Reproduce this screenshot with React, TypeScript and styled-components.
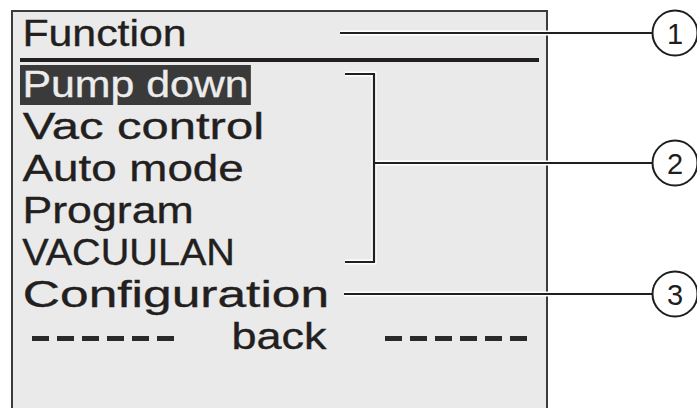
import React from "react";
import styled, { createGlobalStyle } from "styled-components";

const GlobalStyle = createGlobalStyle`
  html, body {
    margin: 0;
    padding: 0;
    background: #ffffff;
  }
  body {
    font-family: "Liberation Sans", Arial, sans-serif;
  }
`;

const Page = styled.div`
  position: relative;
  width: 697px;
  height: 408px;
  overflow: hidden;
  background: #ffffff;
`;

const Display = styled.div`
  box-sizing: border-box;
  margin: 10px 0 0 11px;
  width: 537px;
  height: 420px;
  border: 2px solid #3c3c3c;
  background: #e9eae9;
  padding: 1px 7px 0 7px;
  color: #231f20;
  font-size: 36px;
  -webkit-text-stroke: 0.35px currentColor;
`;

// one line of the LCD: fixed 42px pitch
const Line = styled.div`
  height: 42px;
  line-height: 42px;
  white-space: nowrap;
`;

// the display font is a wide sans: Arial stretched per string
const Caption = styled.span<{ $sx: number; $selected?: boolean }>`
  display: inline-block;
  height: 40px;
  line-height: 40px;
  padding: 0 2px;
  transform: scaleX(${(p) => p.$sx});
  transform-origin: left center;
  background: ${(p) => (p.$selected ? "#3a3a3a" : "transparent")};
  color: ${(p) => (p.$selected ? "#ececec" : "inherit")};
  -webkit-text-stroke-color: ${(p) => (p.$selected ? "#ececec" : "currentColor")};
`;

const Rule = styled.div`
  height: 4px;
  margin: 3px 0 2px 0;
  background: #231f20;
`;

const Footer = styled(Line)`
  display: flex;
  align-items: center;
  padding-left: 12px;
`;

const Dashes = styled.div<{ $gapLeft?: number }>`
  display: flex;
  gap: 8px;
  margin-top: 3px;
  margin-left: ${(p) => p.$gapLeft ?? 0}px;
`;

const Dash = styled.span`
  display: block;
  width: 17px;
  height: 5px;
  background: #2a2a2a;
`;

const Back = styled(Caption)`
  margin-left: 55px;
`;

const Callouts = styled.svg`
  position: absolute;
  left: 0;
  top: 0;
  pointer-events: none;
`;

const Label = styled.text`
  font-family: "Liberation Sans", Arial, sans-serif;
  font-size: 29px;
  fill: #1e1e1e;
`;

const menu: Array<[string, number]> = [
  ["Pump down", 1.19],
  ["Vac control", 1.36],
  ["Auto mode", 1.27],
  ["Program", 1.24],
  ["VACUULAN", 1.1],
  ["Configuration", 1.43],
];

function Leader({ d }: { d: string }) {
  return (
    <g fill="none" strokeLinecap="butt" strokeLinejoin="miter">
      <path d={d} stroke="#ffffff" strokeWidth={5} />
      <path d={d} stroke="#231f20" strokeWidth={2.2} />
    </g>
  );
}

function Bubble({ cy, n }: { cy: number; n: number }) {
  return (
    <g>
      <circle cx={675} cy={cy} r={22.5} fill="#ffffff" stroke="#1e1e1e" strokeWidth={2} />
      <Label x={675} y={cy + 10.5} textAnchor="middle">
        {n}
      </Label>
    </g>
  );
}

export default function App() {
  const six = [0, 1, 2, 3, 4, 5];
  return (
    <>
      <GlobalStyle />
      <Page>
        <Display>
          <Line>
            <Caption $sx={1.19}>Function</Caption>
          </Line>
          <Rule />
          {menu.map(([m, sx], i) => (
            <Line key={m}>
              <Caption $sx={sx} $selected={i === 0}>
                {m}
              </Caption>
            </Line>
          ))}
          <Footer>
            <Dashes>
              {six.map((i) => (
                <Dash key={i} />
              ))}
            </Dashes>
            <Back $sx={1.25}>back</Back>
            <Dashes $gapLeft={76}>
              {six.map((i) => (
                <Dash key={i} />
              ))}
            </Dashes>
          </Footer>
        </Display>
        <Callouts width={697} height={408} viewBox="0 0 697 408">
          <Leader d="M340 33 H653" />
          <Leader d="M345 74 H374 V262 H345 M374 163 H653" />
          <Leader d="M344 294 H653" />
          <Bubble cy={33} n={1} />
          <Bubble cy={163} n={2} />
          <Bubble cy={294} n={3} />
        </Callouts>
      </Page>
    </>
  );
}
